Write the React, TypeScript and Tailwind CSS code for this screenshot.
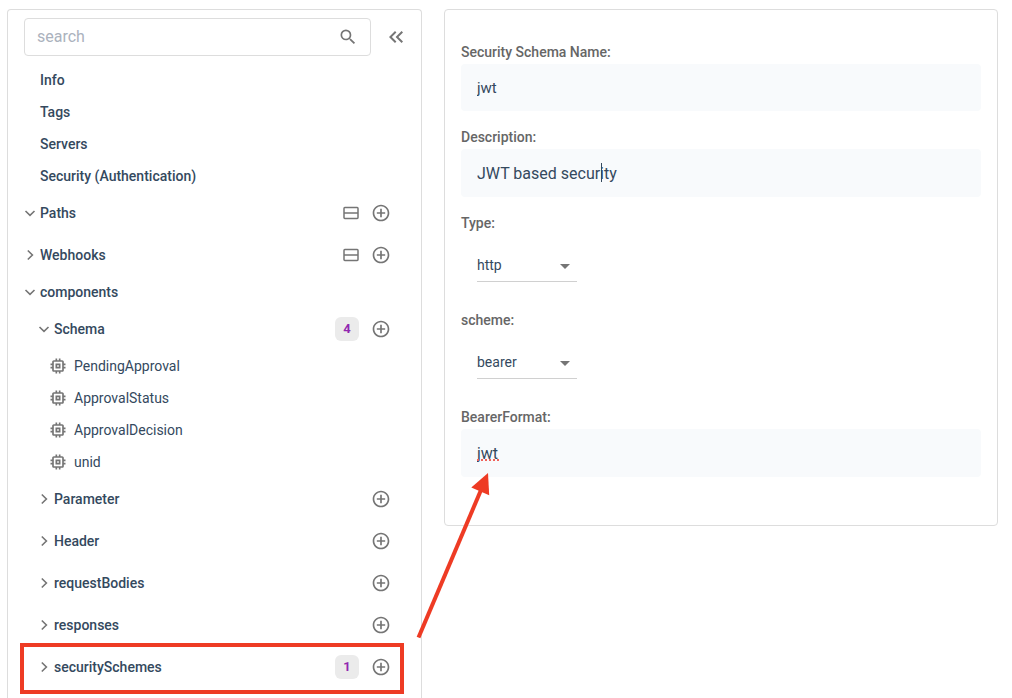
import React from 'react';
import {
  MdAddCircleOutline,
  MdArrowDropDown,
  MdKeyboardDoubleArrowLeft,
  MdMemory,
  MdSearch,
} from 'react-icons/md';

interface SectionProps {
  label: string;
  open?: boolean;
  nested?: boolean;
  count?: number;
  split?: boolean;
  addable?: boolean;
  highlighted?: boolean;
}

const pages = ['Info', 'Tags', 'Servers', 'Security (Authentication)'];

const schemas = ['PendingApproval', 'ApprovalStatus', 'ApprovalDecision', 'unid'];

const componentSections: SectionProps[] = [
  { label: 'Parameter' },
  { label: 'Header' },
  { label: 'requestBodies' },
  { label: 'responses' },
  { label: 'securitySchemes', count: 1, highlighted: true },
];

const Chevron: React.FC<{ open?: boolean }> = ({ open }) => (
  <svg viewBox="0 0 12 12" className="w-3 h-3 shrink-0" fill="none" stroke="#757575" strokeWidth="1.6">
    <path d={open ? 'M1.5 4 L6 8.4 L10.5 4' : 'M3.8 1.5 L8.4 6 L3.8 10.5'} />
  </svg>
);

const SplitIcon: React.FC = () => (
  <svg viewBox="0 0 16 16" className="w-4 h-4" fill="none" stroke="#757575" strokeWidth="1.5">
    <rect x="1" y="2.6" width="14" height="10.8" rx="0.8" />
    <path d="M1 8h14" />
  </svg>
);

const Section: React.FC<SectionProps> = ({ label, open, nested, count, split, addable = true, highlighted }) => (
  <div
    className={`relative flex items-center justify-between pr-[14px] ${addable ? 'h-[42px]' : 'h-8'} ${
      nested ? 'pl-[14px]' : ''
    }`}
  >
    <button className="flex items-center gap-1 font-medium" aria-expanded={!!open}>
      <Chevron open={open} />
      {label}
    </button>
    {addable && (
      <div className="flex items-center gap-3">
        {count !== undefined && (
          <span className="w-6 h-6 rounded-md bg-[#ebebeb] text-center text-[13px] leading-6 font-bold text-[#9127b0]">
            {count}
          </span>
        )}
        {split && (
          <button aria-label={`Split ${label}`}>
            <SplitIcon />
          </button>
        )}
        <button aria-label={`Add ${label}`}>
          <MdAddCircleOutline className="w-5 h-5 text-[#757575]" />
        </button>
      </div>
    )}
    {highlighted && (
      <div className="absolute -top-[3px] -bottom-[6px] -left-1 right-[1px] border-4 border-[#ee3b24] pointer-events-none" />
    )}
  </div>
);

const SelectField: React.FC<{ id: string; label: string; options: string[] }> = ({ id, label, options }) => (
  <div className="mb-[26px]">
    <label htmlFor={id} className="block leading-6 font-medium text-[#666666]">
      {label}
    </label>
    <div className="relative ml-4 mt-[13px] w-[100px]">
      <select
        id={id}
        className="block w-full h-[34px] appearance-none border-b border-[#d0d0d0] bg-transparent outline-none"
      >
        {options.map((option) => (
          <option key={option}>{option}</option>
        ))}
      </select>
      <MdArrowDropDown className="absolute right-0 top-1.5 w-6 h-6 text-[#757575] pointer-events-none" />
    </div>
  </div>
);

const App: React.FC = () => {
  return (
    <div
      className={
        'relative flex items-start gap-[22px] min-h-screen pl-[7px] pr-[14px] pt-[9px] ' +
        "bg-white text-sm text-[#34495e] font-['Roboto',sans-serif]"
      }
    >
      {/* Navigation */}
      <aside className="self-stretch w-[415px] shrink-0 px-4 pt-2 rounded-t border border-b-0 border-[#dddddd]">
        <div className="flex items-center gap-4">
          <div className="flex flex-1 items-center h-[38px] pl-3 pr-3 rounded border border-[#dddddd]">
            <input
              type="text"
              aria-label="search"
              placeholder="search"
              className="flex-1 min-w-0 text-base outline-none placeholder:text-[#abb2bd]"
            />
            <MdSearch className="w-5 h-5 text-[#757575]" />
          </div>
          <button aria-label="Collapse" className="flex w-[18px] justify-center">
            <MdKeyboardDoubleArrowLeft className="w-6 h-6 shrink-0 text-[#757575]" />
          </button>
        </div>

        <nav className="mt-2">
          {pages.map((page) => (
            <button key={page} className="flex items-center w-full h-8 pl-4 font-medium">
              {page}
            </button>
          ))}
          <Section label="Paths" open split />
          <Section label="Webhooks" split />
          <Section label="components" open addable={false} />
          <Section label="Schema" open nested count={schemas.length} />
          {schemas.map((schema) => (
            <button key={schema} className="flex items-center gap-1.5 w-full h-8 pl-6">
              <MdMemory className="w-5 h-5 text-[#757575]" />
              {schema}
            </button>
          ))}
          {componentSections.map((section) => (
            <Section key={section.label} nested {...section} />
          ))}
        </nav>
      </aside>

      {/* Security scheme form */}
      <main className="flex-1 min-w-0 px-4 pt-[30px] pb-12 rounded border border-[#dddddd]">
        <div className="mb-[14px]">
          <label htmlFor="name" className="block leading-6 font-medium text-[#666666]">
            Security Schema Name:
          </label>
          <input
            id="name"
            defaultValue="jwt"
            className="block w-full h-[47px] px-4 rounded bg-[#f8fafc] text-[15px] outline-none"
          />
        </div>

        <div className="mb-[14px]">
          <label htmlFor="description" className="block leading-6 font-medium text-[#666666]">
            Description:
          </label>
          <div className="relative">
            <input
              id="description"
              defaultValue="JWT based security"
              className="block w-full h-12 px-4 rounded bg-[#f8fafc] text-base outline-none"
            />
            <span className="absolute left-[140px] top-[14px] w-px h-[19px] bg-[#34495e]" />
          </div>
        </div>

        <SelectField id="type" label="Type:" options={['http', 'apiKey', 'oauth2', 'openIdConnect']} />
        <SelectField id="scheme" label="scheme:" options={['bearer', 'basic']} />

        <div>
          <label htmlFor="format" className="block leading-6 font-medium text-[#666666]">
            BearerFormat:
          </label>
          <div className="relative">
            <input
              id="format"
              defaultValue="jwt"
              spellCheck={false}
              className="block w-full h-12 px-4 rounded bg-[#f8fafc] text-base outline-none"
            />
            <span className="absolute left-4 top-[30px] w-[22px] border-b-2 border-dotted border-[#f0625a]" />
          </div>
        </div>
      </main>

      {/* Arrow from the securitySchemes entry to the form */}
      <svg
        viewBox="0 0 80 170"
        className="absolute left-[414px] top-[470px] w-20 h-[170px] pointer-events-none"
        aria-hidden="true"
      >
        <path d="M4.5 167.5 L67 20" stroke="#ee3b24" strokeWidth="4" />
        <path d="M74 3 L57.3 17.4 L75.2 25.2 Z" fill="#ee3b24" />
      </svg>
    </div>
  );
};

export default App;
